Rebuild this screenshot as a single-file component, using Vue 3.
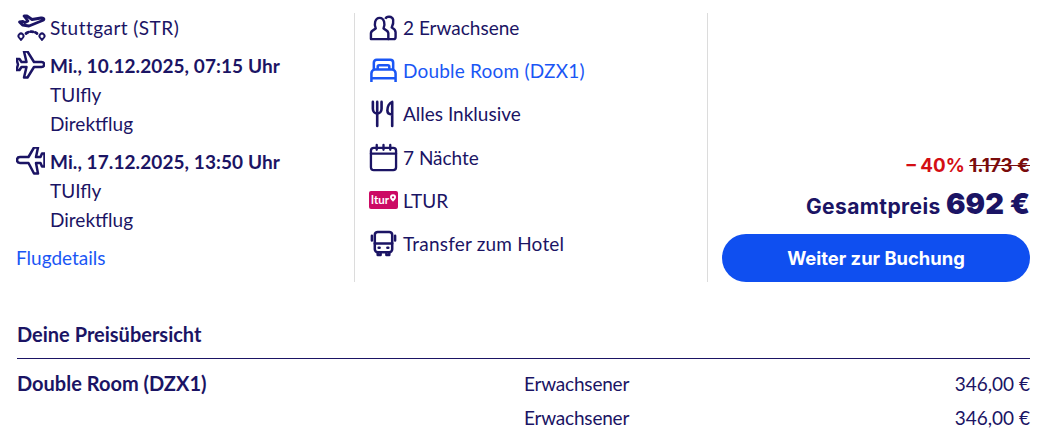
<script setup>
const prices = [
  { name: "Double Room (DZX1)", type: "Erwachsener", price: "346,00 €" },
  { name: "", type: "Erwachsener", price: "346,00 €" },
];
</script>

<template>
  <div class="page">
    <div class="summary">
      <div class="col flights">
        <div class="row origin">
          <svg class="icon" viewBox="0 0 29 29" fill="none" stroke="#1b1464" stroke-width="2.800" stroke-linejoin="round" stroke-linecap="round">
            <path d="M7 3l3 0 5 3.500 9-1.500c3-.5 4 1.500 1.500 2.500L12 13l-6.500-1-3-3 3.500-.5 2 1 3-1.500z" />
            <path d="M9 20.500c3.500-2.500 7.500-2.500 11 0" stroke-dasharray="2.500 2.500" />
            <path d="M4 27l-2-2.500a2.500 2.500 0 1 1 4 0zM25 27l-2-2.500a2.500 2.500 0 1 1 4 0z" stroke-width="2" />
          </svg>
          <span class="wide">Stuttgart (STR)</span>
        </div>
        <div class="leg">
          <div class="row">
            <svg class="icon plane" viewBox="0 1 29 29" fill="none" stroke="#1b1464" stroke-width="2.500" stroke-linejoin="round">
              <path d="M8 1.500h3.500L18 12h7.500c3.500 0 3.500 5 0 5H18L11.500 27.500H8L10.500 17H5.500L3.500 20H.5L2 14.500 .5 9h3l2 3h5z" />
            </svg>
            <strong>Mi., 10.12.2025, 07:15 Uhr</strong>
          </div>
          <div class="sub">TUIfly</div>
          <div class="sub">Direktflug</div>
        </div>
        <div class="leg">
          <div class="row">
            <svg class="icon plane" viewBox="0 1 29 29" fill="none" stroke="#1b1464" stroke-width="2.500" stroke-linejoin="round">
              <path d="M4 11h8.500L18 1.500h4L20 11h4.500l1.500-3.500h2.500v13H26L24.500 17H20l2 10.500h-4L12.500 17H4c-4 0-4-6 0-6z" />
            </svg>
            <strong>Mi., 17.12.2025, 13:50 Uhr</strong>
          </div>
          <div class="sub">TUIfly</div>
          <div class="sub">Direktflug</div>
        </div>
        <a class="link details">Flugdetails</a>
      </div>

      <div class="col features">
        <div class="row">
          <svg class="icon" viewBox="0 0 30 30" fill="none" stroke="#1b1464" stroke-width="2.500" stroke-linejoin="round">
            <path d="M2 27v-6c0-3 4-4 5-5-2-4-1-11 4-11s6 7 4 11c1 1 5 2 5 5v6z" />
            <path d="M17 6c1-3 7-3 8 1 .5 3-.5 6-1.500 8 2 1 4 2 4 5v5c0 1-1 2-2 2h-6" />
          </svg>
          <span>2 Erwachsene</span>
        </div>
        <div class="row blue">
          <svg class="icon" viewBox="0 0 30 30" fill="none" stroke="#1a56f5" stroke-width="2.600" stroke-linejoin="round">
            <path d="M5 14V7c0-2 1-3 3-3h14c2 0 3 1 3 3v7" />
            <path d="M9 14v-3c0-1 .5-1.500 1.500-1.500h9c1 0 1.500 .5 1.500 1.500v3" />
            <path d="M2.500 27V18c0-2 1.500-4 3.500-4h18c2 0 3.500 2 3.500 4v9" />
            <path d="M2.500 23h25" />
          </svg>
          <span class="slight">Double Room (DZX1)</span>
        </div>
        <div class="row">
          <svg class="icon" viewBox="0 0 30 30" fill="none" stroke="#1b1464" stroke-width="2.700" stroke-linecap="round" stroke-linejoin="round">
            <path d="M4 3v7c0 3 2 5 4.500 5S13 13 13 10V3" />
            <path d="M8.500 3v25" />
            <path d="M24 28V3c-3 1-5 5-5 9 0 3 2 4 5 4" />
          </svg>
          <span>Alles Inklusive</span>
        </div>
        <div class="row">
          <svg class="icon" viewBox="0 0 30 30" fill="none" stroke="#1b1464" stroke-width="2.400" stroke-linecap="round" stroke-linejoin="round">
            <rect x="2" y="5" width="26" height="23" rx="3" />
            <path d="M2 11h26M8 2v5M15 2v5M22 2v5" />
          </svg>
          <span>7 Nächte</span>
        </div>
        <div class="row">
          <div class="ltur">
            <span>ltur</span>
            <svg viewBox="0 0 8 10" width="6" height="8"><path d="M4 0a4 4 0 0 1 4 4c0 2.500-2.500 4.500-4 6-1.500-1.500-4-3.500-4-6a4 4 0 0 1 4-4z" fill="#fff" /><circle cx="4" cy="4" r="1.500" fill="#cc0a64" /></svg>
          </div>
          <span>LTUR</span>
        </div>
        <div class="row">
          <svg class="icon" viewBox="0 0 30 30" fill="none" stroke="#1b1464" stroke-width="2.600" stroke-linecap="round" stroke-linejoin="round">
            <rect x="6" y="3" width="18" height="21" rx="3" />
            <path d="M6 15h18M3 7v5M27 7v5M9 24v3h3v-3M18 24v3h3v-3" />
            <path d="M10 19.500h1M19 19.500h1" />
          </svg>
          <span class="slight">Transfer zum Hotel</span>
        </div>
      </div>

      <div class="col total">
        <div class="discount"><span class="percent">– 40%</span> <s>1.173 €</s></div>
        <div class="sum"><span>Gesamtpreis</span> <b>692 €</b></div>
        <button type="button">Weiter zur Buchung</button>
      </div>
    </div>

    <div class="overview">
      <h2>Deine Preisübersicht</h2>
      <div v-for="(item, i) in prices" :key="i" class="price-row">
        <strong>{{ item.name }}</strong>
        <span class="type">{{ item.type }}</span>
        <span class="amount">{{ item.price }}</span>
      </div>
    </div>
  </div>
</template>

<style>
html,
body {
  margin: 0;
  background: #fff;
  overflow: hidden;
}
</style>

<style scoped>
.page {
  height: 436px;
  padding: 13px 15px 0 17px;
  box-sizing: border-box;
  font-family: Lato, "Open Sans", sans-serif;
  font-size: 19px;
  line-height: 29px;
  color: #1b1464;
}

.summary {
  display: grid;
  grid-template-columns: 338px 353px 1fr;
  height: 269px;
}

.col {
  box-sizing: border-box;
  height: 269px;
}

.flights {
  border-right: 1px solid #dcdcdc;
}

.features {
  padding-left: 14px;
  border-right: 1px solid #dcdcdc;
  display: flex;
  flex-direction: column;
  gap: 14.200px;
}

.features .row {
  gap: 5px;
}

.row {
  display: flex;
  align-items: center;
  gap: 4px;
  height: 29px;
}

.origin {
  margin-bottom: 9px;
}

.wide {
  letter-spacing: 0.45px;
}

.slight {
  letter-spacing: 0.2px;
}

.flights strong {
  letter-spacing: 0.08px;
}

.icon {
  width: 29px;
  height: 29px;
  flex: none;
}

.plane {
  margin-left: -1px;
  margin-right: 1px;
}

.leg {
  margin-bottom: 9px;
}

.sub {
  padding-left: 33px;
}

.link {
  color: #1a56f5;
}

.details {
  display: block;
  margin-left: -1px;
}

.blue {
  color: #1a56f5;
}

.ltur {
  width: 29px;
  height: 18px;
  border-radius: 2px;
  background: #cc0a64;
  color: #fff;
  font-size: 11.500px;
  font-weight: 700;
  line-height: 18px;
  display: flex;
  align-items: center;
  justify-content: center;
  gap: 1px;
  flex: none;
}

.ltur svg {
  margin-bottom: 4px;
}

.total {
  display: flex;
  flex-direction: column;
  align-items: flex-end;
  justify-content: flex-end;
  padding-left: 14px;
  font-family: Inter, sans-serif;
  font-weight: 700;
}

.discount {
  font-size: 18.800px;
  line-height: 24px;
  color: #7a0c0c;
  margin-bottom: 8px;
}

.percent {
  color: #d40e14;
}

.sum {
  font-size: 21px;
  letter-spacing: 0.4px;
  line-height: 36px;
  margin-bottom: 9px;
}

.sum b {
  font-size: 29px;
  letter-spacing: 0;
}

button {
  width: 100%;
  height: 48px;
  border: none;
  border-radius: 24px;
  background: #0f4ff0;
  color: #fff;
  font-family: Inter, sans-serif;
  font-size: 18.400px;
  font-weight: 700;
}

.overview {
  margin-top: 38px;
}

h2 {
  margin: 0;
  font-size: 20px;
  font-weight: 700;
  line-height: 29px;
  padding-bottom: 9px;
  border-bottom: 1px solid #1b1464;
  margin-bottom: 10px;
}

.price-row {
  display: grid;
  grid-template-columns: 507px 1fr auto;
  height: 34px;
}

.price-row strong {
  font-size: 20px;
}

.type {
  letter-spacing: -0.2px;
}

.amount {
  text-align: right;
}
</style>
